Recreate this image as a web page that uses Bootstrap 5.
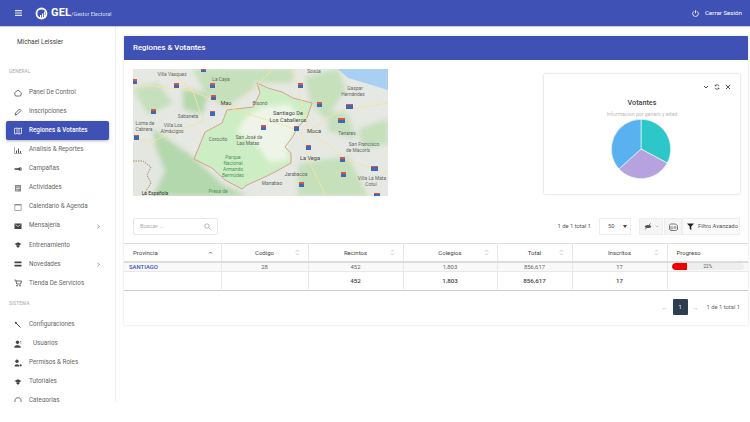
<!DOCTYPE html>
<html lang="es">
<head>
  <meta charset="UTF-8">
  <title>GEL - Regiones &amp; Votantes</title>
  <link href="https://cdn.jsdelivr.net/npm/bootstrap@5.3.0/dist/css/bootstrap.min.css" rel="stylesheet">
  <style>
    body { background: #fff; font-family: Roboto, "Liberation Sans", sans-serif; font-size: 6.5px; color: #555; overflow: hidden; }
    svg { display: block; flex: none; }
    .top-bar { height: 26px; background: #3f51b5; color: #fff; padding: 0 8px 0 15px; box-shadow: 0 1px 1px rgba(0,0,0,.2); position: relative; z-index: 2; }
    .logo-name { font-size: 11px; font-weight: 700; margin-left: 3px; letter-spacing: .2px; }
    .logo-sub { font-size: 5.4px; margin-top: 3px; opacity: .8; }
    .logout { font-size: 6.2px; gap: 6px; padding-top: 2px; }
    .app-wrap { height: 376px; }
    .side-bar { width: 116px; flex: none; border-right: 1px solid #f0f0f0; overflow: hidden; background: #fff; }
    .user-name { font-size: 6.4px; color: #444; padding: 12px 0 0 17px; height: 34px; }
    .side-head { font-size: 4.8px; color: #aaa; padding-left: 9px; height: 12px; margin: 6px 0 5px; line-height: 12px; letter-spacing: .1px; }
    .side-head.next { margin-top: 5px; }
    .side-link { height: 19.1px; margin: 0 6px; padding: 0 8px 0 8px; color: #666; font-size: 6.3px; gap: 7px; border-radius: 2px; text-decoration: none; }
    .side-link svg { width: 8px; height: 8px; }
    .side-link .chev { width: 5px; height: 5px; margin-left: auto; }
    .side-link.on { background: #3f51b5; color: #fff; font-weight: 500; box-shadow: 0 1px 3px rgba(0,0,0,.3); }
    .main-area { background: #fff; padding: 10px 2px 0 8px; min-width: 0; }
    .panel-card { border: 0; border-radius: 1px; box-shadow: 0 0 2px rgba(0,0,0,.2); background: #fff; height: 289px; }
    .panel-top { background: #3f51b5; color: #fff; height: 24px; padding: 0 9px; font-size: 7.8px; font-weight: 500; border-radius: 1px 1px 0 0; }
    .panel-pad { padding: 9px 8px 0 9px; }
    .map-box { width: 255px; height: 127px; background: #e9ebe6; }
    .chart-box { width: 196px; height: 120px; margin-top: 5px; box-shadow: 0 0 2px rgba(0,0,0,.3); border-radius: 1px; padding: 8px 9px 0; }
    .chart-tools { gap: 5px; height: 9px; }
    .chart-title { font-size: 7.2px; font-weight: 500; color: #444; margin-top: 7px; line-height: 10px; }
    .chart-sub { font-size: 5.2px; color: #bbb; line-height: 8px; margin-top: 2px; }
    .pie-wrap { margin-top: 0; padding-right: 2px; }
    .tool-row { margin-top: 22px; height: 17px; font-size: 5.8px; }
    .find-box { width: 85px; height: 17px; border: 1px solid #e8e8e8; border-radius: 2px; padding: 0 6px; color: #aaa; }
    .pick-box { width: 32px; height: 17px; border: 1px solid #eee; margin: 0 8px; padding: 0 3px 0 8px; color: #555; }
    .tool-btn { height: 17px; background: #f5f5f5; border: 1px solid #eee; gap: 3px; padding: 0 4px; color: #555; white-space: nowrap; }
    .tool-btn.w1 { width: 24px; justify-content: center; }
    .tool-btn.w2 { width: 18px; justify-content: center; margin-left: 1px; }
    .tool-btn.w3 { width: 58px; background: #fafafa; gap: 4px; }
    .tool-btn.w3 svg { width: 7px; }
    .data-grid { margin: 8px 0 0; table-layout: fixed; width: 624px; font-size: 5.9px; color: #666; border-top: 1px solid #ddd; border-bottom: 1px solid #ccc; }
    .data-grid th, .data-grid td { padding: 0; text-align: center; vertical-align: middle; border: 0; border-right: 1px solid #e8e8e8; background: transparent; box-shadow: none; color: inherit; }
    .data-grid th:last-child, .data-grid td:last-child { border-right: 0; }
    .data-grid thead tr { height: 18px; }
    .data-grid thead th { font-weight: 400; color: #444; font-size: 6px; border-bottom: 2px solid #ddd; position: relative; }
    .data-grid .row-one { height: 10px; background: #f9f9f9; }
    .data-grid .row-one td { border-bottom: 1px solid #e8e8e8; }
    .data-grid .row-sum { height: 19px; font-weight: 500; font-size: 6.2px; color: #444; }
    .sort-mark { position: absolute; right: 8px; top: 5px; width: 5px; height: 7px; }
    .prov-head { text-align: left !important; padding-left: 9px !important; }
    .prov-link { text-align: left !important; padding-left: 5px !important; color: #3f51b5 !important; font-weight: 500; }
    .prog-wrap { padding: 0 4px !important; }
    .prog-track { height: 7px; font-size: 4.6px; background: #eee; border-radius: 4px; position: relative; }
    .prog-track .progress-bar { background: #f00000; border-radius: 4px 0 0 4px; }
    .prog-label { position: absolute; left: 0; right: 0; top: 0; line-height: 7px; color: #555; text-align: center; }
    .pager-row { margin-top: 8px; padding-right: 8px; gap: 5px; color: #666; height: 16px; font-size: 5.8px; }
    .page-on { width: 15px; height: 16px; background: #2c3e50; color: #fff; border-radius: 1px; }
    .pager-arrow { color: #999; font-size: 6px; }
    .pager-count { margin-left: 3px; }
    .map-txt { font-family: Roboto, "Liberation Sans", sans-serif; font-size: 4.9px; fill: #666; text-anchor: middle; }
    .map-big { font-size: 5.6px; fill: #444; }
    .map-park { fill: #4c9560; }
  </style>
</head>
<body>
  <nav class="top-bar d-flex align-items-center">
    <svg width="7" height="6" viewBox="0 0 7 6"><path d="M0 .6h7M0 3h7M0 5.400h7" stroke="#fff" stroke-width="1.100" opacity=".85"/></svg>
    <div class="d-flex align-items-center" style="margin-left:13px">
      <svg width="13" height="13" viewBox="0 0 13 13"><circle cx="6.500" cy="6.500" r="5" fill="none" stroke="#fff" stroke-width="1.800"/><path d="M5 11V8h1.200v3zM7 11V6.500h1.200V11zM9 11V4.500h1.200V11z" fill="#fff"/></svg>
      <span class="logo-name">GEL</span><span class="logo-sub">/Gestor Electoral</span>
    </div>
    <div class="logout d-flex align-items-center ms-auto">
      <svg width="7" height="7" viewBox="0 0 8 8"><path d="M2.200 1.600a3.200 3.200 0 1 0 3.600 0M4 .3v3.500" fill="none" stroke="#fff" stroke-width="1"/></svg>
      <span>Cerrar Sesión</span>
    </div>
  </nav>

  <div class="app-wrap d-flex">
    <aside class="side-bar">
      <div class="user-name">Michael Leissler</div>
      <div class="side-head">GENERAL</div>
      <a class="side-link d-flex align-items-center"><svg viewBox="0 0 8 8"><path d="M.5 4 4 1l3.500 3-1 3h-5z" fill="none" stroke="#555" stroke-width=".8"/></svg>Panel De Control</a>
      <a class="side-link d-flex align-items-center"><svg viewBox="0 0 8 8"><path d="M1 7l.5-2L5.500 1 7 2.500 3 6.500z" fill="none" stroke="#555" stroke-width=".9"/></svg>Inscripciones</a>
      <a class="side-link on d-flex align-items-center"><svg viewBox="0 0 8 8"><path d="M.5 1.500 3 1l2 .5L7.500 1v5.500L5 7 3 6.500.5 7zM3 1v5.500M5 1.500V7" fill="none" stroke="#fff" stroke-width=".7"/></svg>Regiones &amp; Votantes</a>
      <a class="side-link d-flex align-items-center"><svg viewBox="0 0 8 8"><path d="M.5 1v6.500H8" fill="none" stroke="#777" stroke-width=".6"/><path d="M2 7V4.500h1V7zM4 7V2.500h1V7zM6 7V5h1v2z" fill="#555"/></svg>Analisis &amp; Reportes</a>
      <a class="side-link d-flex align-items-center"><svg viewBox="0 0 8 8"><path d="M.5 3.200h3.500L6.500 2v4L4 4.800H.5z" fill="#444"/><path d="M7.300 2.500v3" stroke="#444" stroke-width=".7"/></svg>Campañas</a>
      <a class="side-link d-flex align-items-center"><svg viewBox="0 0 8 8"><path d="M1 1h6v6.500H1z" fill="#888"/><path d="M2 3h4M2 4.500h4M2 6h2.500" stroke="#fff" stroke-width=".6"/></svg>Actividades</a>
      <a class="side-link d-flex align-items-center"><svg viewBox="0 0 8 8"><path d="M.8 1.500h6.400v6H.8z" fill="none" stroke="#888" stroke-width=".7"/><path d="M.8 1.200h6.400v1.200H.8z" fill="#888"/></svg>Calendario &amp; Agenda</a>
      <a class="side-link d-flex align-items-center"><svg viewBox="0 0 8 8"><path d="M.5 1.500h7v5.500h-7z" fill="#444"/><path d="m1.500 2.800 2.500 1.700 2.500-1.700" fill="none" stroke="#fff" stroke-width=".6"/></svg>Mensajería<svg class="chev" viewBox="0 0 5 5"><path d="m1.500.8 2 1.700-2 1.700" fill="none" stroke="#777" stroke-width=".7"/></svg></a>
      <a class="side-link d-flex align-items-center"><svg viewBox="0 0 8 8"><path d="M.5 3 4 1.300 7.500 3 4 4.700z" fill="#444"/><path d="M2.500 4.200v1.500l1.500 1 1.500-1V4.200" fill="#444"/></svg>Entrenamiento</a>
      <a class="side-link d-flex align-items-center"><svg viewBox="0 0 8 8"><path d="M.5 1.500h7V3h-7zM.5 5h7v1.500h-7z" fill="#444"/><path d="M.5 4h7" stroke="#444" stroke-width=".5"/></svg>Novedades<svg class="chev" viewBox="0 0 5 5"><path d="m1.500.8 2 1.700-2 1.700" fill="none" stroke="#777" stroke-width=".7"/></svg></a>
      <a class="side-link d-flex align-items-center"><svg viewBox="0 0 8 8"><path d="M.5 1h1.200l1 4h4L7.500 2H2" fill="none" stroke="#444" stroke-width=".8"/><circle cx="3" cy="6.800" r=".8" fill="#444"/><circle cx="6" cy="6.800" r=".8" fill="#444"/></svg>Tienda De Servicios</a>
      <div class="side-head next">SISTEMA</div>
      <a class="side-link d-flex align-items-center"><svg viewBox="0 0 8 8"><path d="M1.500 1.500 6.500 6.500" stroke="#444" stroke-width="1"/><circle cx="1.800" cy="1.800" r="1" fill="#444"/></svg>Configuraciones</a>
      <a class="side-link d-flex align-items-center"><svg viewBox="0 0 8 8"><circle cx="3.500" cy="2.300" r="1.700" fill="#444"/><path d="M.5 7.500c.2-3 5.800-3 6 0zM6 1.500h1.500M6 3h1.500" fill="#444" stroke="#444" stroke-width=".5"/></svg><span class="ms-1">Usuarios</span></a>
      <a class="side-link d-flex align-items-center"><svg viewBox="0 0 8 8"><circle cx="3" cy="2.300" r="1.700" fill="#444"/><path d="M.5 7.500c.2-3 4.800-3 5 0z" fill="#444"/><circle cx="6.700" cy="6.300" r="1.100" fill="#444"/></svg>Permisos &amp; Roles</a>
      <a class="side-link d-flex align-items-center"><svg viewBox="0 0 8 8"><path d="M.5 3 4 1.300 7.500 3 4 4.700z" fill="#444"/><path d="M2.500 4.200v1.500l1.500 1 1.500-1V4.200" fill="#444"/></svg>Tutoriales</a>
      <a class="side-link d-flex align-items-center"><svg viewBox="0 0 8 8"><path d="M1 3c0-3 6-3 6 0v4.500H1z" fill="none" stroke="#555" stroke-width=".8"/></svg>Categorías</a>
    </aside>

    <main class="main-area flex-grow-1">
      <div class="panel-card card">
        <div class="panel-top d-flex align-items-center">Regiones &amp; Votantes</div>
        <div class="panel-pad">
          <div class="d-flex justify-content-between align-items-start">
            <div class="map-box">
              <svg width="255" height="127" viewBox="0 0 255 127">
                <defs>
                  <filter id="soft" x="-10%" y="-10%" width="120%" height="120%"><feGaussianBlur stdDeviation="2.500"/></filter>
                  <filter id="faint"><feGaussianBlur stdDeviation=".35"/></filter>
                  <linearGradient id="shield" x1="0" y1="0" x2="0" y2="1"><stop offset=".3" stop-color="#d9534f"/><stop offset=".3" stop-color="#3f68b8"/></linearGradient>
                </defs>
                <rect width="255" height="127" fill="#e6e8e3"/>
                <g filter="url(#soft)">
                  <path d="M60 0h55l8 18-30 20-20-12zM0 20l25-6 15 20-25 12zM172 8l33-8 8 20-20 30-15-15zM195 42l20 3 8 25-28-8zM225 60l30-10v25l-25 5zM165 95l50-8 20 40h-70zM100 0h60v14l-35 0z" fill="#c5e0bb"/>
                  <path d="M20 60 60 88l30 28 25 11H0V112l25-15zM50 20l25 5-5 20-20-5z" fill="#b4d8ad"/>
                  <path d="M0 72h20l12 30-12 25H0z" fill="#e4e6e0"/>
                </g>
                <path d="M205 0h50v21l-23-7-17-5z" fill="#a9cff2"/>
                <path d="M124 14l11 5 14 4 11 6 19 5-5 15-9 9-6 11-7 9 6 6v10l-16 9-10 5-18 8-5 4-17-9-13-12-18-9 11-27 17-9 5-13 26-3 7-14z" fill="#cdeec4"/>
                <path d="M128 38l28-3 12 14-8 18-7 10 3 14-20 2-14-20-18-10 8-14z" fill="#eef5e8" filter="url(#soft)"/>
                <path d="M124 14l11 5 14 4 11 6 19 5-5 15-9 9-6 11-7 9 6 6v10l-16 9-10 5-18 8-5 4-17-9-13-12-18-9 11-27 17-9 5-13 26-3 7-14z" fill="none" stroke="#d98a7f" stroke-width=".8"/>
                <path d="M0 15 60 22l40 18 68 22 8 30 17 35M160 0l8 30 8 32 40 30 39 12M35 0l25 22 10 30L20 72 0 70M176 62l30-20 49-8M100 40l40-40" fill="none" stroke="#f4e3a0" stroke-width=".9" filter="url(#faint)"/>
                <path d="M0 92h10l8 6-4 8 4 8-8 13" fill="none" stroke="#8a6a35" stroke-width=".7" stroke-dasharray="1.500 1"/>
                <g fill="url(#shield)" filter="url(#faint)">
                  <rect x="-1" y="10" width="5" height="5"/><rect x="41" y="14" width="5" height="5"/><rect x="77" y="14" width="5" height="5"/><rect x="78" y="26" width="5" height="5"/><rect x="18" y="40" width="5" height="5"/><rect x="77" y="42" width="5" height="5"/><rect x="1" y="66" width="5" height="5"/><rect x="165" y="14" width="5" height="5"/><rect x="184" y="33" width="5" height="5"/><rect x="213" y="35" width="7" height="5"/><rect x="205" y="49" width="7" height="5"/><rect x="128" y="56" width="5" height="5"/><rect x="161" y="57" width="5" height="5"/><rect x="173" y="76" width="5" height="5"/><rect x="207" y="88" width="5" height="5"/><rect x="238" y="97" width="7" height="5"/><rect x="208" y="103" width="5" height="5"/><rect x="166" y="113" width="5" height="5"/><rect x="68" y="0" width="5" height="3"/><rect x="241" y="124" width="6" height="3"/>
                </g>
                <text class="map-txt" x="39" y="7">Villa Vasquez</text>
                <text class="map-txt" x="88" y="12">La Caya</text>
                <text class="map-txt" x="181" y="4">Sosúa</text>
                <text class="map-txt" x="222" y="21">Gaspar</text>
                <text class="map-txt" x="220" y="27">Hernández</text>
                <text class="map-txt map-big" x="93" y="36">Mao</text>
                <text class="map-txt" x="127" y="36">Bisonó</text>
                <text class="map-txt" x="55" y="49">Sabaneta</text>
                <text class="map-txt" x="12" y="56">Loma de</text>
                <text class="map-txt" x="11" y="62">Cabrera</text>
                <text class="map-txt" x="40" y="58">Villa Los</text>
                <text class="map-txt" x="39" y="64">Almácigos</text>
                <text class="map-txt map-big" x="155" y="46">Santiago De</text>
                <text class="map-txt map-big" x="155" y="52.500">Los Caballeros</text>
                <text class="map-txt map-big" x="181" y="64">Moca</text>
                <text class="map-txt" x="214" y="66">Tenares</text>
                <text class="map-txt" x="85" y="72">Corocito</text>
                <text class="map-txt" x="116" y="70">San José de</text>
                <text class="map-txt" x="115" y="76">Las Matas</text>
                <text class="map-txt" x="231" y="77">San Francisco</text>
                <text class="map-txt" x="225" y="83">de Macorís</text>
                <text class="map-txt map-big" x="177" y="91">La Vega</text>
                <text class="map-txt map-park" x="100" y="90">Parque</text>
                <text class="map-txt map-park" x="100" y="96">Nacional</text>
                <text class="map-txt map-park" x="100" y="102">Armando</text>
                <text class="map-txt map-park" x="100" y="108">Bermúdez</text>
                <text class="map-txt" x="163" y="107">Jarabacoa</text>
                <text class="map-txt" x="239" y="111">Villa La Mata</text>
                <text class="map-txt" x="238" y="117">Cotuí</text>
                <text class="map-txt" x="139" y="116">Manabao</text>
                <text class="map-txt map-park" x="85" y="124">Presa de</text>
                <text class="map-txt" x="22" y="126" style="fill:#333">La Española</text>
              </svg>
            </div>
            <div class="chart-box">
              <div class="chart-tools d-flex justify-content-end align-items-center">
                <svg width="6" height="6" viewBox="0 0 6 6"><path d="m1 2 2 2 2-2" fill="none" stroke="#444" stroke-width=".9"/></svg>
                <svg width="6" height="6" viewBox="0 0 6 6"><path d="M5.200 2.200A2.300 2.300 0 0 0 1 2M.8 3.800A2.300 2.300 0 0 0 5 4" fill="none" stroke="#444" stroke-width=".8"/><path d="M1 .6V2h1.400M5 5.400V4H3.600" fill="none" stroke="#444" stroke-width=".6"/></svg>
                <svg width="6" height="6" viewBox="0 0 6 6"><path d="m1 1 4 4M5 1 1 5" stroke="#444" stroke-width=".9"/></svg>
              </div>
              <div class="text-center">
                <div class="chart-title">Votantes</div>
                <div class="chart-sub">Informacion por genero y edad</div>
              </div>
              <div class="pie-wrap d-flex justify-content-center">
                <svg width="62" height="62" viewBox="-31 -31 62 62">
                  <path d="M0 0V-29.700A29.700 29.700 0 0 1 26.200 14z" fill="#2ec7c9" stroke="#fff" stroke-width=".6"/>
                  <path d="M0 0 26.200 14A29.700 29.700 0 0 1-22 19.900z" fill="#b6a2de" stroke="#fff" stroke-width=".6"/>
                  <path d="M0 0-22 19.900A29.700 29.700 0 0 1 0-29.700z" fill="#5ab1ef" stroke="#fff" stroke-width=".6"/>
                </svg>
              </div>
            </div>
          </div>

          <div class="tool-row d-flex align-items-center">
            <div class="find-box d-flex align-items-center justify-content-between">
              <span>Buscar ...</span>
              <svg width="7" height="7" viewBox="0 0 7 7"><circle cx="3" cy="3" r="2.200" fill="none" stroke="#888" stroke-width=".6"/><path d="m4.700 4.700 1.600 1.600" stroke="#888" stroke-width=".6"/></svg>
            </div>
            <span class="ms-auto">1 de 1 total 1</span>
            <div class="pick-box d-flex align-items-center justify-content-between">
              <span>50</span>
              <svg width="4" height="3" viewBox="0 0 4 3"><path d="M0 0h4L2 3z" fill="#444"/></svg>
            </div>
            <div class="d-flex">
              <div class="tool-btn w1 d-flex align-items-center">
                <svg width="8" height="7" viewBox="0 0 8 7"><path d="M.5 3.500C2 1.500 6 1.500 7.500 3.500 6 5.500 2 5.500.5 3.500z" fill="#555"/><path d="M1 6.500 6.500.5" stroke="#555" stroke-width=".8"/></svg>
                <svg width="4" height="3" viewBox="0 0 4 3"><path d="m.5.500 1.500 1.500L3.500.5" fill="none" stroke="#aaa" stroke-width=".6"/></svg>
              </div>
              <div class="tool-btn w2 d-flex align-items-center">
                <svg width="9" height="8" viewBox="0 0 9 8"><path d="M.5 2.500C.5 1 2 1 3 1h2.500C7 1 8.500 2 8.500 3.500v2.500c0 1-1 1.500-2 1.500H2C1 7.500.5 6.500.5 5.500z" fill="none" stroke="#444" stroke-width=".7"/><circle cx="6" cy="4.500" r="1" fill="none" stroke="#444" stroke-width=".6"/><path d="M1 4h3M1 5.800h3" stroke="#444" stroke-width=".6"/></svg>
              </div>
              <div class="tool-btn w3 d-flex align-items-center">
                <svg width="7" height="7" viewBox="0 0 7 7"><path d="M0 .5h7L4.300 3.500V7L2.700 6V3.500z" fill="#222"/></svg>
                <span>Filtro Avanzado</span>
              </div>
            </div>
          </div>
        </div>

        <table class="table data-grid">
          <colgroup><col style="width:97px"><col style="width:87px"><col style="width:95px"><col style="width:94px"><col style="width:75px"><col style="width:95px"><col style="width:81px"></colgroup>
          <thead>
            <tr>
              <th class="prov-head">Provincia<svg class="sort-mark" viewBox="0 0 5 7"><path d="m1 4.500 1.500-1.500L4 4.500" fill="none" stroke="#444" stroke-width=".8"/></svg></th>
              <th>Codigo<svg class="sort-mark" viewBox="0 0 5 7"><path d="m1 2.500 1.500-1.500L4 2.500M1 4.500 2.500 6 4 4.500" fill="none" stroke="#aaa" stroke-width=".6"/></svg></th>
              <th>Recintos<svg class="sort-mark" viewBox="0 0 5 7"><path d="m1 2.500 1.500-1.500L4 2.500M1 4.500 2.500 6 4 4.500" fill="none" stroke="#aaa" stroke-width=".6"/></svg></th>
              <th>Colegios<svg class="sort-mark" viewBox="0 0 5 7"><path d="m1 2.500 1.500-1.500L4 2.500M1 4.500 2.500 6 4 4.500" fill="none" stroke="#aaa" stroke-width=".6"/></svg></th>
              <th>Total<svg class="sort-mark" viewBox="0 0 5 7"><path d="m1 2.500 1.500-1.500L4 2.500M1 4.500 2.500 6 4 4.500" fill="none" stroke="#aaa" stroke-width=".6"/></svg></th>
              <th>Inscritos<svg class="sort-mark" viewBox="0 0 5 7"><path d="m1 2.500 1.500-1.500L4 2.500M1 4.500 2.500 6 4 4.500" fill="none" stroke="#aaa" stroke-width=".6"/></svg></th>
              <th class="prov-head">Progreso</th>
            </tr>
          </thead>
          <tbody>
            <tr class="row-one">
              <td class="prov-link">SANTIAGO</td><td>28</td><td>452</td><td>1,803</td><td>856,617</td><td>17</td>
              <td class="prog-wrap"><div class="progress prog-track"><div class="progress-bar" style="width:22%"></div><span class="prog-label">22%</span></div></td>
            </tr>
            <tr class="row-sum">
              <td></td><td></td><td>452</td><td>1,803</td><td>856,617</td><td>17</td><td></td>
            </tr>
          </tbody>
        </table>

        <div class="pager-row d-flex justify-content-end align-items-center">
          <span class="pager-arrow">←</span>
          <span class="page-on d-flex align-items-center justify-content-center">1</span>
          <span class="pager-arrow">→</span>
          <span class="pager-count">1 de 1 total 1</span>
        </div>
      </div>
    </main>
  </div>
</body>
</html>
